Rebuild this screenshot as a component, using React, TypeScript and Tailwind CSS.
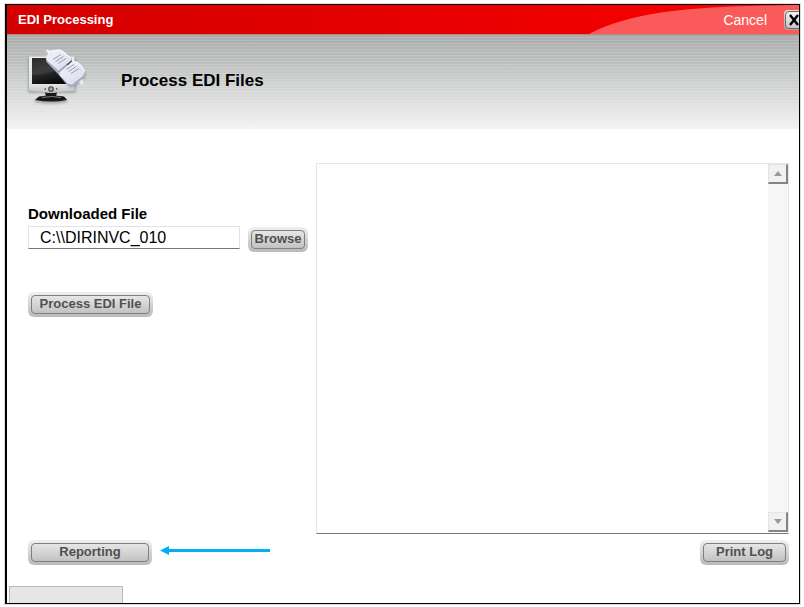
import type { ButtonHTMLAttributes } from "react";

function SilverButton({ className = "", children, ...rest }: ButtonHTMLAttributes<HTMLButtonElement>) {
  return (
    <button
      type="button"
      className={`group flex h-[25px] shrink-0 rounded-md bg-linear-to-b from-[#f0f0f0] to-[#b9b9b9] p-[3px] ${className}`}
      {...rest}
    >
      <span className="flex h-[19px] flex-1 items-center justify-center rounded border border-[#808080] bg-linear-to-b from-[#e6e6e6] to-[#c2c2c2] pb-0.5 text-[13px] leading-4 font-bold whitespace-nowrap text-[#505050] group-active:to-[#e6e6e6]">
        {children}
      </span>
    </button>
  );
}

function ScrollButton({ label, points }: { label: string; points: string }) {
  return (
    <button
      type="button"
      aria-label={label}
      className="flex size-5 items-center justify-center border-t border-r-2 border-b-2 border-l border-t-[#e3e3e3] border-r-[#858585] border-b-[#858585] border-l-[#e3e3e3] bg-[#f1f1f1]"
    >
      <svg viewBox="0 0 8 5" className="h-[5px] w-2" fill="#999999">
        <polygon points={points} />
      </svg>
    </button>
  );
}

function ComputerIcon() {
  return (
    <svg viewBox="0 0 75 70" className="h-[70px] w-[75px] shrink-0" aria-hidden="true">
      <defs>
        <linearGradient id="screen" x1="0" y1="0" x2="0.4" y2="1">
          <stop offset="0" stopColor="#1c1c1c" />
          <stop offset="0.5" stopColor="#303030" />
          <stop offset="1" stopColor="#0c0c0c" />
        </linearGradient>
        <linearGradient id="bezel" x1="0" y1="0" x2="0" y2="1">
          <stop offset="0" stopColor="#eceeee" />
          <stop offset="0.8" stopColor="#e2e4e4" />
          <stop offset="1" stopColor="#c4c6c6" />
        </linearGradient>
        <linearGradient id="plug" x1="0" y1="0" x2="0.8" y2="1">
          <stop offset="0" stopColor="#f2f2fa" />
          <stop offset="1" stopColor="#dcddec" />
        </linearGradient>
        <filter id="soft" x="-20%" y="-20%" width="140%" height="140%">
          <feGaussianBlur stdDeviation="1.2" />
        </filter>
      </defs>
      <rect x="8" y="17" width="48" height="36" rx="2" fill="#777777" opacity="0.5" filter="url(#soft)" />
      <ellipse cx="31" cy="61" rx="17" ry="3" fill="#777777" opacity="0.5" filter="url(#soft)" />
      <path d="M10 16.5h43.500q1 0 1 1v33q-23 3-45.500 0v-33q0-1 1-1z" fill="url(#bezel)" />
      <path d="M12 18h40v26H12z" fill="url(#screen)" />
      <path d="M12 35q20 0 27-8L27 18H12z" fill="#ffffff" opacity="0.07" />
      <circle cx="31" cy="49" r="2.3" fill="#aaaaaa" stroke="#404040" strokeWidth="1.1" />
      <path d="M24.500 49h1.500M36 49h1.500" stroke="#555555" strokeWidth="1.5" />
      <path d="M25 52.500q6 1 12 0l-1 4h-10z" fill="#181818" />
      <path d="M19 56.500q12-2 25 0l3 3.500q-15 3-32 0z" fill="#151515" />
      <path d="M22 57.500q10-2 19 0" fill="none" stroke="#8a8a8a" strokeWidth="0.9" />
      <path d="M27 21l11 13 11 13 4 1 12-10 1-6-7 0z" fill="#555555" opacity="0.35" filter="url(#soft)" />
      <path d="M25.500 10.500l2-1.200 6 3.200-3 3.500z" fill="#e8e8f2" />
      <path d="M57 39l3-2.500 3.500 4.500v4l-2.500 0z" fill="#e4e5f0" />
      <path d="M26 18l0.500 4 12 12.500 9.500 11.500 4.500 1 11.500-9.500 1-6.500z" fill="#a9abc6" />
      <path d="M26 18l2.500-6 3-1.500 7.500-1 3.500 1L51.500 18l0.500 2L39 31 27 20.500z" fill="url(#plug)" />
      <path d="M39.500 32.500L52.500 21l5 1 4.500 4 3 5.500-2 4.500-11 8.500-4-0.500-8.500-9z" fill="url(#plug)" />
      <path d="M28.500 12.500l3-1.500 7.500-1 3 1 9.500 8" fill="none" stroke="#ffffff" strokeWidth="0.9" />
      <path d="M53 21.500l4.500 1 4.500 4 2.500 5" fill="none" stroke="#ffffff" strokeWidth="0.9" />
      <path d="M38.500 31.500L52 20" stroke="#85879f" strokeWidth="0.9" />
      <path d="M33 19.500l8-5M35.500 21.500l8-5M38 23.500l8-5M46 29.500l8-5M48.500 31.500l8-5M51 33.500l8-5" stroke="#9c9eb1" strokeWidth="1" />
    </svg>
  );
}

export default function App() {
  return (
    <div className="flex min-h-screen bg-white pt-1 pr-1 pb-[3px] pl-[5px] font-['Liberation_Sans',Arial,sans-serif] text-black">
      <div className="flex flex-1 flex-col overflow-hidden border border-l-2 border-black ring-1 ring-[#dddddd]">
        <header className="relative flex h-[30px] items-center overflow-hidden border-b border-[#b08a8a] bg-linear-to-r from-[#d20000] to-[#fa0000] text-white">
          <svg viewBox="0 0 210 29" preserveAspectRatio="none" className="absolute top-0 right-0 h-full w-[210px]" aria-hidden="true">
            <path d="M0 29C45 5 110 1 210 0V29z" fill="#fb5a5a" />
          </svg>
          <h1 className="flex-1 pl-[11px] text-[13px] leading-4 font-bold">EDI Processing</h1>
          <a href="#cancel" className="relative mr-[17px] text-sm">
            Cancel
          </a>
          <button
            type="button"
            aria-label="Close"
            className="relative -mr-[5px] flex size-5 shrink-0 rounded bg-linear-to-b from-[#f0dada] to-[#b5a0a0] p-px"
          >
            <span className="flex h-[18px] flex-1 items-center justify-center rounded-sm border border-[#666666] bg-linear-to-b from-[#f2f2f2] to-[#c6c6c6]">
              <svg viewBox="0 0 12 12" className="size-3" stroke="#000000" strokeWidth="2.4">
                <path d="M2 1l8 10M10 1L2 11" />
              </svg>
            </span>
          </button>
        </header>

        <div className="flex h-[94px] bg-[repeating-linear-gradient(to_bottom,transparent_0_2px,rgba(255,255,255,0.14)_2px_3px),linear-gradient(to_bottom,#a9acab,#f3f3f3)] pt-[5px] pl-[13px]">
          <ComputerIcon />
          <h2 className="pt-[31px] pl-[26px] text-[17px] leading-5 font-bold">Process EDI Files</h2>
        </div>

        <main className="flex flex-1 flex-col pt-[34px] pr-[10px] pl-[21px]">
          <div className="flex flex-1 gap-2">
            <div className="w-[280px] shrink-0 pt-[41px]">
              <label htmlFor="downloaded" className="block text-[15px] leading-5 font-bold">
                Downloaded File
              </label>
              <div className="mt-0.5 flex items-start gap-2">
                <input
                  id="downloaded"
                  type="text"
                  defaultValue="C:\\DIRINVC_010"
                  className="h-[23px] min-w-0 flex-1 border border-[#e3e3e3] border-b-[#777777] pl-[11px] text-base outline-none"
                />
                <SilverButton className="mt-px w-[60px]">Browse</SilverButton>
              </div>
              <SilverButton className="mt-10 w-[125px]">Process EDI File</SilverButton>
            </div>

            <div className="flex flex-1 border border-[#e6e6e6] border-b-[#777777]">
              <textarea aria-label="Log" readOnly className="flex-1 resize-none outline-none" />
              <div className="mb-px flex flex-col justify-between bg-[#f6f6f6]">
                <ScrollButton label="Scroll up" points="4,0 8,5 0,5" />
                <ScrollButton label="Scroll down" points="0,0 8,0 4,5" />
              </div>
            </div>
          </div>

          <div className="flex items-start pt-1.5">
            <SilverButton className="w-[124px]">Reporting</SilverButton>
            <svg viewBox="0 0 110 20" className="ml-2 h-5 w-[110px]" aria-hidden="true">
              <path d="M0 10.500l9-4.500v9z" fill="#00b0f0" />
              <path d="M8 10.500h102" stroke="#00b0f0" strokeWidth="3" />
            </svg>
            <SilverButton className="ml-auto w-[89px]">Print Log</SilverButton>
          </div>
        </main>

        <footer className="mt-[21px] ml-0.5 h-[17px] w-[114px] border border-b-0 border-[#bbbbbb] bg-[#e6e6e6]" />
      </div>
    </div>
  );
}
